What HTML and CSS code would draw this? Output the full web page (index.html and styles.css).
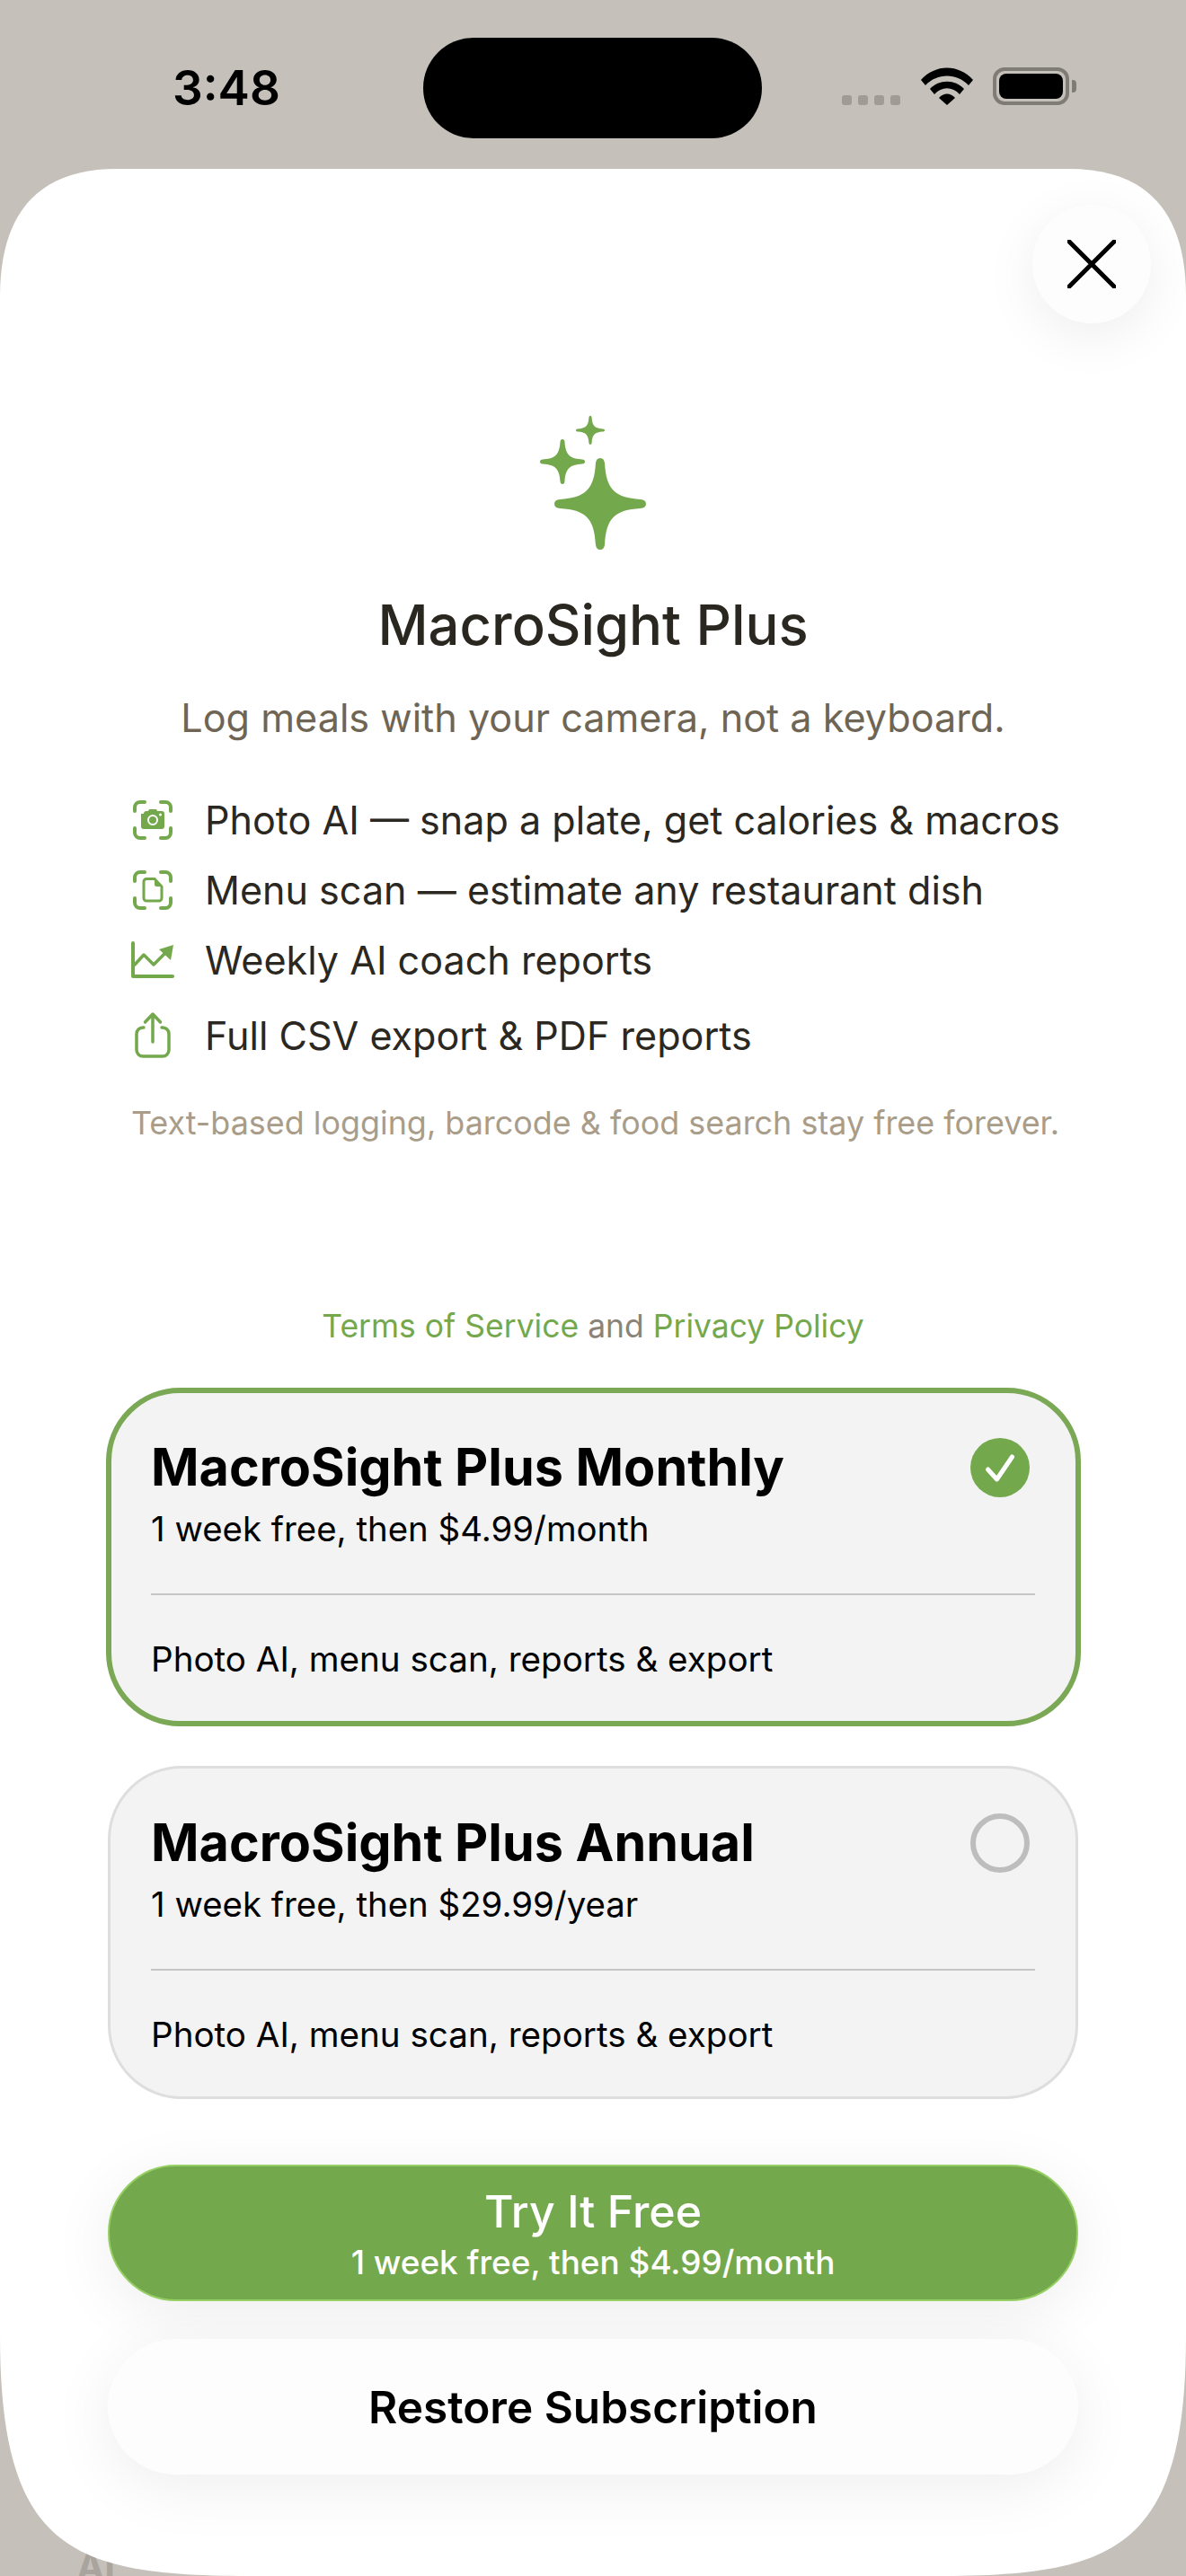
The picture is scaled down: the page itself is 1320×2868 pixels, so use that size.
FILE: index.html
```html
<!DOCTYPE html>
<html>
<head>
  <meta charset="UTF-8">
  <title>MacroSight Plus</title>
  <link rel="stylesheet" href="styles.css">
</head>
<body>

  <svg class="defs" width="0" height="0">
    <symbol id="star" viewBox="-100 -100 200 200">
      <path d="M0 -100 C6 -100 9 -96 10 -88 C13 -32 32 -13 88 -10 C96 -9 100 -6 100 0 C100 6 96 9 88 10 C32 13 13 32 10 88 C9 96 6 100 0 100 C-6 100 -9 96 -10 88 C-13 32 -32 13 -88 10 C-96 9 -100 6 -100 0 C-100 -6 -96 -9 -88 -10 C-32 -13 -13 -32 -10 -88 C-9 -96 -6 -100 0 -100Z"/>
    </symbol>
    <symbol id="brackets" viewBox="0 0 48 44">
      <path d="M4 12 V8 A6 6 0 0 1 10 2 H15 M33 2 H38 A6 6 0 0 1 44 8 V12 M44 31 V36 A6 6 0 0 1 38 42 H33 M15 42 H10 A6 6 0 0 1 4 36 V31"/>
    </symbol>
  </svg>

  <div class="peek">AI</div>

  <div class="statusbar">
    <div class="time">3:48</div>
    <div class="island"></div>
    <div class="sysicons">
      <div class="dots"><i></i><i></i><i></i><i></i></div>
      <svg class="wifi" width="58" height="42" viewBox="0 0 58 42">
        <path d="M0 14 C16 -4 42 -4 58 14 L53 20 C40 6 18 6 5 20Z"/>
        <path d="M10 24 C20 13 38 13 48 24 L43 30 C35 21 23 21 15 30Z"/>
        <path d="M20 34 C25 28 33 28 38 34 L29 42Z"/>
      </svg>
      <div class="battery"><div class="battery-fill"></div></div>
      <div class="battery-nub"></div>
    </div>
  </div>

  <div class="sheet">
    <button class="close">
      <svg width="54" height="54" viewBox="0 0 54 54"><path d="M2 2 L52 52 M52 2 L2 52"/></svg>
    </button>

    <svg class="sparkle" width="124" height="150" viewBox="0 0 124 150">
      <use href="#star" x="16" y="47" width="102" height="102"/>
      <use href="#star" x="0" y="26" width="50" height="50"/>
      <use href="#star" x="40" y="0" width="32" height="32"/>
    </svg>

    <h1>MacroSight Plus</h1>
    <p class="tagline">Log meals with your camera, not a keyboard.</p>

    <ul class="features">
      <li>
        <svg class="icon" width="48" height="44" viewBox="0 0 48 44">
          <use href="#brackets" width="48" height="44"/>
          <path class="solid" d="M14 15 A3 3 0 0 1 17 12 H19 L20 10 H28 L29 12 H34 A3 3 0 0 1 37 15 V29 A3 3 0 0 1 34 32 H14 A3 3 0 0 1 11 29 V15Z"/>
          <circle class="lens" cx="24" cy="22" r="5"/>
          <circle class="lens-dot" cx="32.500" cy="16" r="1.500"/>
        </svg>
        <span>Photo AI — snap a plate, get calories &amp; macros</span>
      </li>
      <li>
        <svg class="icon" width="48" height="44" viewBox="0 0 48 44">
          <use href="#brackets" width="48" height="44"/>
          <path class="thin" d="M17 9.500 H26 L34 18 V31 A3 3 0 0 1 31 34 H17 A3 3 0 0 1 14 31 V12.500 A3 3 0 0 1 17 9.500Z"/>
          <path class="solid" d="M26 10 L34 18 H28 A2 2 0 0 1 26 16Z"/>
        </svg>
        <span>Menu scan — estimate any restaurant dish</span>
      </li>
      <li>
        <svg class="icon" width="48" height="44" viewBox="0 0 48 44">
          <path class="line" d="M2 3 V40 H46"/>
          <path class="line-thin" d="M4 27 L14 16 L25 27 L37 15"/>
          <path class="solid" d="M31 10 L47 5 L44 22Z"/>
        </svg>
        <span>Weekly AI coach reports</span>
      </li>
      <li>
        <svg class="icon" width="48" height="56" viewBox="0 0 48 56">
          <path class="line-thin" d="M24 35 V5 M15.500 13 L24 4 L32.500 13"/>
          <path class="line-thin" d="M14 19 H13 A7 7 0 0 0 6 26 V44 A7 7 0 0 0 13 51 H35 A7 7 0 0 0 42 44 V26 A7 7 0 0 0 35 19 H34"/>
        </svg>
        <span>Full CSV export &amp; PDF reports</span>
      </li>
    </ul>

    <p class="footnote">Text-based logging, barcode &amp; food search stay free forever.</p>

    <p class="legal"><a>Terms of Service</a> and <a>Privacy Policy</a></p>

    <div class="plans">
      <div class="plan selected">
        <div class="plan-head">
          <div>
            <div class="plan-name">MacroSight Plus Monthly</div>
            <div class="plan-price">1 week free, then $4.99/month</div>
          </div>
          <div class="radio on">
            <svg width="66" height="66" viewBox="0 0 66 66"><path d="M19.500 35 L29.500 46 L46.500 21"/></svg>
          </div>
        </div>
        <div class="plan-line"></div>
        <div class="plan-note">Photo AI, menu scan, reports &amp; export</div>
      </div>

      <div class="plan">
        <div class="plan-head">
          <div>
            <div class="plan-name">MacroSight Plus Annual</div>
            <div class="plan-price">1 week free, then $29.99/year</div>
          </div>
          <div class="radio"></div>
        </div>
        <div class="plan-line"></div>
        <div class="plan-note">Photo AI, menu scan, reports &amp; export</div>
      </div>
    </div>

    <button class="try">
      <span class="try-main">Try It Free</span>
      <span class="try-sub">1 week free, then $4.99/month</span>
    </button>
    <button class="restore">Restore Subscription</button>
  </div>

</body>
</html>
```

FILE: styles.css
```css
* { box-sizing: border-box; }

html, body {
  margin: 0;
  height: 2868px;
  overflow: hidden;
}
body {
  background-color: #c5c0ba;
  font-family: Inter, "Noto Sans", sans-serif;
  position: relative;
}
.defs { position: absolute; }
#star { fill: #74a84c; }

.peek {
  position: absolute;
  left: 85px;
  top: 2833px;
  font-size: 42px;
  font-weight: 700;
  line-height: 50px;
  color: #a9a59e;
}

/* status bar */
.statusbar {
  height: 188px;
  display: grid;
  grid-template-columns: 471px 377px 1fr;
  align-items: start;
  padding-top: 42px;
}
.time {
  padding-left: 192px;
  margin-top: 26px;
  font-size: 53px;
  line-height: 60px;
  font-weight: 600;
  color: #000;
}
.island {
  height: 112px;
  background-color: #000;
  border-radius: 56px;
}
.sysicons {
  display: flex;
  align-items: flex-end;
  margin-top: 33px;
  padding-left: 89px;
  height: 42px;
}
.dots { display: flex; gap: 7px; }
.dots i {
  width: 11px;
  height: 11px;
  border-radius: 3px;
  background-color: #a09b94;
}
.wifi { margin-left: 23px; fill: #000; }
.battery {
  width: 85px;
  height: 42px;
  margin-left: 22px;
  border: 4px solid #7f7b75;
  border-radius: 13px;
  padding: 3px;
}
.battery-fill {
  height: 100%;
  background-color: #000;
  border-radius: 8px;
}
.battery-nub {
  width: 5px;
  height: 14px;
  margin: 0 0 14px 3px;
  background-color: #7f7b75;
  border-radius: 0 4px 4px 0;
}

/* sheet */
.sheet {
  position: relative;
  height: 2680px;
  background-color: #fff;
  clip-path: path("M0 142 C0 52 40 0 130 0 H1190 C1280 0 1320 52 1320 142 V2412 C1320 2652 1240 2680 1040 2680 H280 C80 2680 0 2652 0 2412 Z");
  padding: 275px 120px 0;
  display: flex;
  flex-direction: column;
}
.close {
  position: absolute;
  top: 40px;
  right: 39px;
  width: 132px;
  height: 132px;
  border: none;
  border-radius: 50%;
  background-color: #fdfdfd;
  box-shadow: 0 14px 60px rgba(0, 0, 0, 0.07);
  display: flex;
  align-items: center;
  justify-content: center;
  padding: 0;
}
.close path { stroke: #000; stroke-width: 5; stroke-linecap: round; fill: none; }

.sparkle { align-self: center; margin-left: 6px; }

h1 {
  margin: 43px 0 0;
  font-size: 61.500px;
  line-height: 80px;
  font-weight: 500;
  text-align: center;
  color: #2a2620;
}
.tagline {
  margin: 36px 0 0;
  font-size: 43.200px;
  line-height: 54px;
  text-align: center;
  color: #6f6555;
}

.features {
  list-style: none;
  margin: 65px 0 0;
  padding: 0 0 0 26px;
  display: flex;
  flex-direction: column;
  gap: 34px;
}
.features li {
  display: flex;
  align-items: center;
  gap: 34px;
  font-size: 43.100px;
  line-height: 44px;
  color: #2b2721;
  white-space: nowrap;
}
.icon { flex: none; }
.icon use { fill: none; stroke: #74a84c; stroke-width: 4; stroke-linecap: round; }
.icon .solid { fill: #74a84c; stroke: none; }
.icon .lens { fill: #74a84c; stroke: #fff; stroke-width: 2; }
.icon .lens-dot { fill: #fff; }
.icon .thin { fill: none; stroke: #74a84c; stroke-width: 3; }
.icon .line { fill: none; stroke: #74a84c; stroke-width: 4; stroke-linecap: round; stroke-linejoin: round; }
.icon .line-thin { fill: none; stroke: #74a84c; stroke-width: 3.500; stroke-linecap: round; stroke-linejoin: round; }

.footnote {
  margin: 47px 0 0;
  padding-left: 26px;
  font-size: 35.900px;
  line-height: 44px;
  color: #a99c89;
  white-space: nowrap;
}

.legal {
  margin: 183px 0 0;
  font-size: 35.500px;
  line-height: 44px;
  text-align: center;
  color: #8a8378;
}
.legal a { color: #74a84c; }

/* plans */
.plans {
  margin-top: 46px;
  display: flex;
  flex-direction: column;
  gap: 44px;
}
.plan {
  background-color: #f3f3f3;
  border: 3px solid #dedede;
  border-radius: 82px;
  padding: 44px 45px;
}
.plan.selected {
  border: 6px solid #7aa855;
  margin: 0 -3px 0 -2px;
  padding-left: 44px;
}
.plan-head {
  display: flex;
  justify-content: space-between;
  align-items: flex-start;
}
.plan-name {
  font-size: 57.500px;
  line-height: 76px;
  font-weight: 700;
  color: #000;
}
.plan-price {
  margin-top: 6px;
  font-size: 38.400px;
  line-height: 50px;
  color: #000;
}
.radio {
  width: 66px;
  height: 66px;
  margin: 6px 6px 0 0;
  border: 6px solid #bdbdbd;
  border-radius: 50%;
}
.radio.on {
  border: none;
  background-color: #74a84c;
}
.radio svg { display: block; }
.radio path { fill: none; stroke: #fff; stroke-width: 5; stroke-linecap: round; stroke-linejoin: round; }
.plan-line {
  height: 2px;
  margin-top: 47px;
  background-color: #c6c6c6;
}
.plan-note {
  margin-top: 46px;
  font-size: 38.600px;
  line-height: 50px;
  color: #000;
}

/* buttons */
.try, .restore {
  width: 100%;
  font-family: inherit;
  border-radius: 76px;
  box-shadow: 0 14px 70px rgba(0, 0, 0, 0.07);
}
.try {
  height: 152px;
  margin-top: 73px;
  border: 2px solid #96d064;
  background-color: #74a84c;
  color: #fff;
  display: flex;
  flex-direction: column;
  align-items: center;
  padding: 20px 0 0;
}
.try-main { font-size: 50px; line-height: 60px; font-weight: 500; }
.try-sub { margin-top: 5px; font-size: 36.900px; line-height: 44px; font-weight: 500; }
.restore {
  height: 151px;
  margin-top: 42px;
  border: none;
  background-color: #fdfdfd;
  color: #000;
  font-size: 49.500px;
  font-weight: 600;
}
```
